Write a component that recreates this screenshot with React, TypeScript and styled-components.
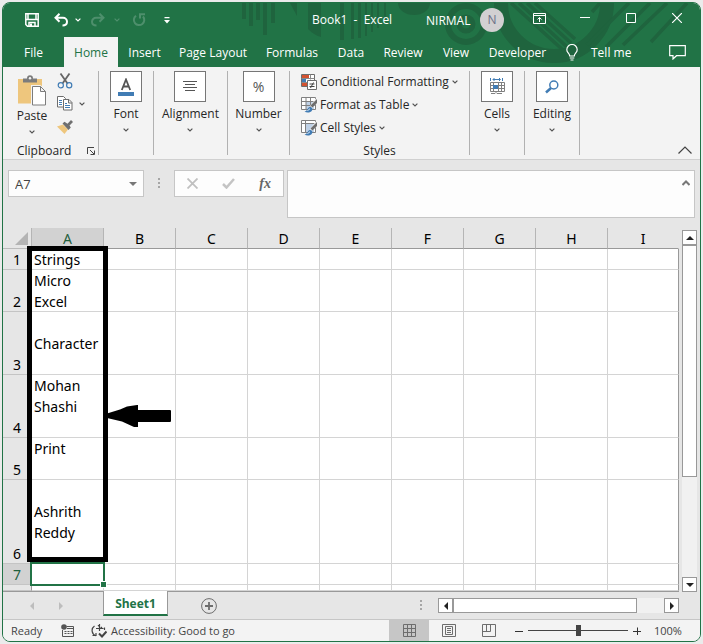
import React from "react";
import styled, { createGlobalStyle } from "styled-components";

const GREEN = "#217346";
const UI = `"Open Sans", "Noto Sans", sans-serif`;
const CELL = `"Noto Sans", "Open Sans", sans-serif`;

const GlobalStyle = createGlobalStyle`
  *, *::before, *::after { box-sizing: border-box; }
  body { margin: 0; background: #ebebeb; font-family: ${UI}; font-size: 12px; color: #262626; }
  button, input, textarea { font: inherit; color: inherit; margin: 0; }
  svg { display: block; flex: none; }
`;

const Desktop = styled.div`
  padding: 2px;
`;

const Window = styled.main`
  display: flex;
  flex-direction: column;
  border: 1px solid ${GREEN};
  border-radius: 8px;
  overflow: hidden;
  background: #e6e6e6;
`;

const PlainButton = styled.button`
  display: flex;
  align-items: center;
  justify-content: center;
  padding: 0;
  border: 0;
  background: none;
  cursor: pointer;
`;

/* ---------- header ---------- */

const Header = styled.header`
  position: relative;
  background: ${GREEN};
  color: #fff;
`;

const Decoration = styled.svg`
  position: absolute;
  top: 0;
  right: 0;
`;

const TitleBar = styled.div`
  position: relative;
  display: flex;
  align-items: center;
  height: 34px;
`;

const QuickTools = styled.div`
  display: flex;
  align-items: center;
  flex: 1;
  padding-left: 14px;
`;

const ToolButton = styled(PlainButton)<{ $width: number; $dim?: boolean }>`
  width: ${(p) => p.$width}px;
  height: 24px;
  color: ${(p) => (p.$dim ? "#4e8f6c" : "#fff")};
`;

const DocumentTitle = styled.h1`
  margin: 0;
  width: 114px;
  font-size: 12px;
  font-weight: 400;
  line-height: 18px;
  white-space: pre;
`;

const Account = styled(PlainButton)`
  width: 78px;
  justify-content: space-between;
  color: #fff;
`;

const Avatar = styled.span`
  width: 24px;
  height: 24px;
  border-radius: 50%;
  background: #d2d0d2;
  color: #6b6f86;
  line-height: 24px;
  text-align: center;
`;

const WindowButton = styled(PlainButton)`
  width: 46px;
  height: 30px;
  color: #fff;
`;

const WindowButtons = styled.div`
  display: flex;
  align-self: flex-start;
  padding-left: 12px;
`;

const TabBar = styled.nav`
  position: relative;
  display: flex;
  align-items: center;
  height: 30px;
`;

const RibbonTab = styled.button<{ $width: number; $active?: boolean }>`
  width: ${(p) => p.$width}px;
  height: 30px;
  padding: 0;
  border: 0;
  background: ${(p) => (p.$active ? "#f3f3f3" : "none")};
  color: ${(p) => (p.$active ? GREEN : "#fff")};
  white-space: nowrap;
`;

const TellMe = styled(PlainButton)`
  gap: 13px;
  margin-left: 10px;
  color: #fff;
`;

const CommentButton = styled(PlainButton)`
  margin-left: auto;
  margin-right: 14px;
  color: #fff;
`;

/* ---------- ribbon ---------- */

const Ribbon = styled.section`
  position: relative;
  display: flex;
  height: 93px;
  padding: 4px 0;
  background: #f3f3f3;
  border-bottom: 1px solid #d0d0d0;
`;

const Group = styled.div<{ $width: number }>`
  display: flex;
  flex-direction: column;
  align-items: center;
  width: ${(p) => p.$width}px;
  border-right: 1px solid #b1b1b1;
`;

const GroupBody = styled.div`
  display: flex;
  flex: 1;
  align-self: stretch;
`;

const GroupFooter = styled.div`
  display: flex;
  align-items: center;
  justify-content: center;
  align-self: stretch;
  height: 12px;
  line-height: 12px;
  margin-bottom: -2px;
`;

const ClipboardFooter = styled(GroupFooter)`
  justify-content: space-between;
  padding: 0 3px 0 14px;
`;

const PasteButton = styled(PlainButton)`
  flex-direction: column;
  justify-content: flex-start;
  width: 54px;
  padding: 4px 0 0 4px;
`;

const PasteLabel = styled.span`
  line-height: 20px;
  height: 24px;
`;

const SmallTools = styled.div`
  display: flex;
  flex-direction: column;
  margin-top: -2px;
`;

const SmallRow = styled.div`
  display: flex;
  align-items: center;
  gap: 6px;
  height: 23px;
`;

const Collapsed = styled(PlainButton)`
  flex-direction: column;
  justify-content: flex-start;
`;

const IconBox = styled.span`
  display: flex;
  align-items: center;
  justify-content: center;
  width: 32px;
  height: 31px;
  border: 1px solid #767676;
  background: #fff;
`;

const CollapsedLabel = styled.span`
  height: 26px;
  line-height: 24px;
`;

const StyleList = styled.div`
  display: flex;
  flex-direction: column;
  margin-top: -1px;
  padding-left: 11px;
`;

const StyleButton = styled(PlainButton)`
  justify-content: flex-start;
  gap: 3px;
  height: 23px;
  white-space: nowrap;
`;

const CollapseRibbon = styled(PlainButton)`
  margin: auto 8px 0 auto;
`;

/* ---------- formula bar ---------- */

const FormulaBar = styled.section`
  display: flex;
  align-items: flex-start;
  padding: 10px 5px;
`;

const Boxed = styled.div`
  display: flex;
  align-items: center;
  height: 27px;
  border: 1px solid #c6c6c6;
  background: #fdfdfd;
`;

const NameBox = styled(Boxed)`
  width: 136px;
`;

const NameInput = styled.input`
  flex: 1;
  min-width: 0;
  padding: 0 0 0 6px;
  border: 0;
  background: none;
  color: #444;
  font-size: 13px;
  outline: 0;
`;

const NameArrow = styled(PlainButton)`
  width: 20px;
  height: 24px;
`;

const GripSlot = styled.div`
  display: flex;
  align-items: center;
  justify-content: center;
  width: 30px;
  height: 27px;
`;

const FormulaActions = styled(Boxed)`
  justify-content: space-around;
  width: 110px;
  margin-right: 3px;
`;

const FormulaField = styled(Boxed)`
  flex: 1;
  align-items: stretch;
  height: 48px;
`;

const FormulaInput = styled.textarea`
  flex: 1;
  min-width: 0;
  padding: 4px;
  border: 0;
  background: none;
  outline: 0;
  resize: none;
`;

const ExpandFormula = styled(PlainButton)`
  width: 16px;
  height: 24px;
`;

/* ---------- sheet ---------- */

const SheetArea = styled.section`
  display: flex;
  gap: 3px;
  padding-right: 3px;
`;

const GridFrame = styled.div`
  position: relative;
  flex: 1;
  min-width: 0;
  border-bottom: 1px solid #999;
`;

const Grid = styled.table`
  width: 100%;
  table-layout: fixed;
  border-collapse: separate;
  border-spacing: 0;
  font-family: ${CELL};
  font-size: 14px;
  line-height: 20px;
  color: #000;
`;

const Column = styled.col<{ $width?: number }>`
  width: ${(p) => (p.$width ? p.$width + "px" : "auto")};
`;

const ColumnHead = styled.th<{ $selected?: boolean }>`
  height: 21px;
  padding: 2px 0 0;
  border-bottom: 1px solid #999;
  border-right: 1px solid #b5b5b5;
  background: ${(p) => (p.$selected ? "#d2d2d2" : "#e6e6e6")};
  color: ${(p) => (p.$selected ? "#1f5f3d" : "#000")};
  font-weight: 400;
  line-height: 18px;
  &:last-child { border-right-color: #e6e6e6; }
`;

const Corner = styled.td`
  height: 21px;
  padding: 0 0 0 12px;
  border-bottom: 1px solid #bbb;
  border-right: 1px solid #b5b5b5;
`;

const RowHead = styled.th<{ $selected?: boolean }>`
  padding: 0;
  border-bottom: 1px solid #c4c4c4;
  border-right: 1px solid #999;
  background: ${(p) => (p.$selected ? "#d2d2d2" : "#e6e6e6")};
  color: ${(p) => (p.$selected ? "#1f5f3d" : "#000")};
  font-weight: 400;
  line-height: 18px;
  vertical-align: bottom;
`;

const Row = styled.tr<{ $height: number }>`
  height: ${(p) => p.$height}px;
`;

const Cell = styled.td`
  position: relative;
  padding: 0 0 0 2px;
  border-right: 1px solid #d4d4d4;
  border-bottom: 1px solid #d4d4d4;
  background: #fff;
  line-height: 21px;
  vertical-align: top;
  white-space: pre;
  &:last-child { border-right-color: #999; }
`;

const CellText = styled.div<{ $height: number }>`
  height: ${(p) => p.$height}px;
`;

const Selection = styled.div`
  position: absolute;
  inset: -2px -2px -2px -2px;
  border: 2px solid ${GREEN};
  z-index: 1;
  &::after {
    content: "";
    position: absolute;
    right: -4px;
    bottom: -4px;
    width: 7px;
    height: 7px;
    border: 1px solid #fff;
    background: ${GREEN};
  }
`;

const Highlight = styled.div`
  position: absolute;
  left: 24px;
  top: 18px;
  width: 81px;
  height: 316px;
  border: 5px solid #000;
  z-index: 2;
`;

const Pointer = styled.svg`
  position: absolute;
  left: 104px;
  top: 176px;
  z-index: 2;
`;

const VerticalScroll = styled.div`
  display: flex;
  flex-direction: column;
  width: 15px;
  padding-top: 2px;
`;

const ScrollButton = styled(PlainButton)`
  flex: none;
  width: 15px;
  height: 15px;
  border: 1px solid #999;
  background: #fff;
`;

const VerticalTrack = styled.div`
  flex: 1;
  background: #f1f1f1;
`;

const VerticalThumb = styled.div`
  height: 70%;
  border: 1px solid #999;
  background: #fff;
`;

const SheetBar = styled.section`
  display: flex;
  align-items: center;
  height: 27px;
  padding-right: 21px;
`;

const SheetNav = styled.div`
  display: flex;
  justify-content: space-around;
  width: 100px;
  padding: 0 28px 0 15px;
`;

const SheetTab = styled.button`
  align-self: flex-start;
  position: relative;
  z-index: 1;
  width: 65px;
  height: 25px;
  margin-top: -1px;
  padding: 2px 0 0;
  border: 1px solid #999;
  border-top: 0;
  border-bottom: 2px solid ${GREEN};
  background: #fff;
  color: ${GREEN};
  font-weight: 700;
`;

const AddSheet = styled(PlainButton)`
  margin-left: 33px;
`;

const HorizontalScroll = styled.div`
  display: flex;
  width: 241px;
`;

const ScrollGrip = styled.div`
  margin-left: auto;
  margin-right: 15px;
`;

const HorizontalTrack = styled.div`
  flex: 1;
  background: #f1f1f1;
`;

const HorizontalThumb = styled.div`
  width: 87%;
  height: 15px;
  border: 1px solid #999;
  background: #fff;
`;

/* ---------- status bar ---------- */

const StatusBar = styled.footer`
  display: flex;
  align-items: center;
  height: 22px;
  padding-right: 18px;
  border-top: 1px solid #c6c6c6;
  background: #f3f3f3;
  font-size: 11px;
  color: #444;
`;

const Ready = styled.span`
  width: 58px;
  padding-left: 8px;
`;

const Accessibility = styled(PlainButton)`
  gap: 4px;
  margin-left: 17px;
  white-space: nowrap;
`;

const ViewButtons = styled.div`
  display: flex;
  margin-left: auto;
  margin-right: 1px;
`;

const ViewButton = styled(PlainButton)<{ $active?: boolean }>`
  width: 40px;
  height: 21px;
  background: ${(p) => (p.$active ? "#c6c6c6" : "none")};
`;

const ZoomButton = styled(PlainButton)`
  width: 18px;
  height: 20px;
`;

const ZoomSlider = styled.input`
  appearance: none;
  width: 100px;
  height: 14px;
  background: linear-gradient(#444, #444) center / 100% 1px no-repeat;
  &::-webkit-slider-thumb {
    appearance: none;
    width: 5px;
    height: 11px;
    background: #444;
  }
`;

const ZoomValue = styled.output`
  width: 28px;
  margin-left: 8px;
`;

/* ---------- icons ---------- */

const Chevron = ({ color = "#555" }: { color?: string }) => (
  <svg width="6" height="4" viewBox="0 0 6 4" fill="none" stroke={color} strokeWidth="1.2">
    <path d="M.6.6 3 3 5.4.6" />
  </svg>
);

const Grip = () => (
  <svg width="3" height="11" viewBox="0 0 3 11" fill="#a6a6a6">
    <path d="M0 0h2v2H0zM0 4h2v2H0zM0 8h2v2H0z" />
  </svg>
);

const Triangle = ({ d, color = "#222" }: { d: string; color?: string }) => (
  <svg width="8" height="8" viewBox="0 0 8 8" fill={color}>
    <path d={d} />
  </svg>
);

const LEFT = "M6 0v8L2 4z";
const RIGHT = "M2 0v8l4-4z";
const UP = "M0 6h8L4 2z";
const DOWN = "M0 2h8L4 6z";

const SaveIcon = () => (
  <svg width="14" height="14" viewBox="0 0 14 14" fill="none" stroke="currentColor" strokeWidth="1.5">
    <path d="M.8.8h12.4v12.4H2.5L.8 11.5zM1 6.5h12M3 1v5.5M11 1v5.5M4 13.5v-4h6v4" />
    <path d="M5 10.5h2v3H5z" fill="currentColor" stroke="none" />
  </svg>
);

const UndoIcon = () => (
  <svg width="15" height="14" viewBox="0 0 15 14" fill="none" stroke="currentColor" strokeWidth="2">
    <path d="M5.5.8 1.5 4.8l4 4M2 4.8h7a4 4 0 0 1 4 4c0 2.500-1.500 3.700-4.500 3.700" />
  </svg>
);

const RedoIcon = () => (
  <svg width="15" height="14" viewBox="0 0 15 14" fill="none" stroke="currentColor" strokeWidth="2">
    <path d="m9.500.8 4 4-4 4M13 4.800H6a4 4 0 0 0-4 4c0 2.500 1.500 3.700 4.500 3.700" />
  </svg>
);

const RepeatIcon = () => (
  <svg width="14" height="14" viewBox="0 0 14 14" fill="none" stroke="currentColor" strokeWidth="2">
    <path d="M4 2.700A5.200 5.200 0 1 0 11 3.500M8 5.500V1.200h5" />
  </svg>
);

const CustomizeIcon = () => (
  <svg width="6" height="7" viewBox="0 0 6 7" fill="currentColor">
    <path d="M.5 0h5v1.200h-5zM0 3h6L3 6.500z" />
  </svg>
);

const RibbonOptionsIcon = () => (
  <svg width="13" height="11" viewBox="0 0 13 11" fill="none" stroke="currentColor">
    <path d="M.5.5h12v10H.5zM.5 2.500h12M6.500 9V4.500M4.500 6.500l2-2 2 2" />
  </svg>
);

const BulbIcon = () => (
  <svg width="12" height="17" viewBox="0 0 12 17" fill="none" stroke="currentColor" strokeWidth="1.2">
    <path d="M3.700 12c0-2.500-2.900-3.200-2.900-6.300a5.200 5.200 0 0 1 10.400 0c0 3.100-2.900 3.800-2.900 6.300zM3.700 14h4.600M4.500 16h3" />
  </svg>
);

const CommentIcon = () => (
  <svg width="17" height="15" viewBox="0 0 17 15" fill="none" stroke="currentColor" strokeWidth="1.200">
    <path d="M.7.7h15.600v10H7.500l-3.500 3.300v-3.300H.7z" />
  </svg>
);

const PasteIcon = () => (
  <svg width="28" height="31" viewBox="0 0 28 31">
    <path d="M0 4h24v24.500H0z" fill="#eec67d" />
    <path d="M5 7.500V3.500h4C9 1.500 10 .3 12 .3s3 1.200 3 3.200h4v4z" fill="#7c7c7c" />
    <circle cx="12" cy="3.200" r="1.200" fill="#f3f3f3" />
    <path d="M13 10h9.500l6 6v15H13z" fill="#f3f3f3" />
    <path d="M14.500 11.500h8l5 5v13.500h-13zM22.500 11.500v5h5" fill="#fff" stroke="#7c7c7c" />
  </svg>
);

const CutIcon = () => (
  <svg width="16" height="16" viewBox="0 0 16 16" fill="none">
    <path d="m3.500.5 7 10M12.500.5l-7 10" stroke="#666" strokeWidth="1.800" />
    <circle cx="3.800" cy="12.300" r="2.600" stroke="#417cb4" strokeWidth="1.200" />
    <circle cx="12.200" cy="12.300" r="2.600" stroke="#417cb4" strokeWidth="1.200" />
  </svg>
);

const CopyIcon = () => (
  <svg width="16" height="15" viewBox="0 0 16 15" fill="#fff" stroke="#6d6d6d">
    <path d="M.5.500h6l2 2v8.500h-8z" />
    <path d="M2 4.500h3M2 6.500h3M2 8.500h3" stroke="#417cb4" />
    <path d="M6.500 3.500h5.500l3 3v7.500H6.500zM11.500 3.500v3.500h3.500" />
    <path d="M8 7.500h2M8 9.500h5M8 11.500h5" stroke="#417cb4" />
  </svg>
);

const BrushIcon = () => (
  <svg width="16" height="14" viewBox="0 0 16 14">
    <path d="m0 6.500 6-2 5 5L7.500 14z" fill="#eec67d" />
    <path d="m5.500 3.500 2-1.800 3 2L14 0l2 2-3.500 3.500 1.300 2-2.300 2.500z" fill="#6f6f6f" />
  </svg>
);

const LauncherIcon = () => (
  <svg width="8" height="8" viewBox="0 0 8 8" fill="none" stroke="#444">
    <path d="M7 .5H.5V7M3 3l4 4M7.500 3.500v4h-4" />
  </svg>
);

const FontIcon = () => (
  <svg width="16" height="18" viewBox="0 0 16 18">
    <path d="M0 14h16v4H0z" fill="#417cb4" />
    <path d="M3.800 12 8 1.500 12.200 12M5.300 8.500h5.400" fill="none" stroke="#555" strokeWidth="1.800" />
  </svg>
);

const AlignIcon = () => (
  <svg width="14" height="11" viewBox="0 0 14 11" stroke="#555">
    <path d="M0 .5h14M2 3.500h10M0 6.500h14M2 9.500h10" />
  </svg>
);

const PercentGlyph = styled.span`
  font-size: 14px;
  line-height: 18px;
  color: #555;
`;

const CellsIcon = () => (
  <svg width="15" height="17" viewBox="0 0 15 17" fill="none" stroke="#808080">
    <path d="M.5 0v3M12.500 0v3M3 1.500h7M4.500 0 3 1.500 4.500 3M9 0l1.500 1.500L9 3" stroke="#417cb4" />
    <path d="M.5 4.500h14v9H.5zM.5 7.500h14M.5 10.500h14M3.500 4.500v9M8.500 4.500v9M11.500 4.500v9M1 15.500h4l1-1 1 1h5" />
    <path d="M3 7h5v4H3z" fill="#417cb4" stroke="none" />
  </svg>
);

const SearchIcon = () => (
  <svg width="14" height="14" viewBox="0 0 14 14" fill="none" stroke="#417cb4">
    <circle cx="8.800" cy="5" r="4" strokeWidth="1.500" />
    <path d="m6 8-5 4.500" strokeWidth="2.500" />
  </svg>
);

const ConditionalIcon = () => (
  <svg width="16" height="16" viewBox="0 0 16 16">
    <path d="M.5.500h13v12H.500z" fill="#fff" stroke="#6d6d6d" />
    <path d="M9.500.500v5M.5 4.500h13M.5 8.500h6" stroke="#8a8a8a" />
    <path d="M1 1h7v3H1zM1 9h5v3H1z" fill="#d35230" />
    <path d="M1 5h4v3H1z" fill="#417cb4" />
    <path d="M6.500 6.500h9v9h-9z" fill="#fff" stroke="#6d6d6d" />
    <path d="M8.500 10h5M8.500 12.500h5M12.500 8.500l-3 5.500" stroke="#444" fill="none" />
  </svg>
);

const TableBrushIcon = ({ lines }: { lines: string }) => (
  <svg width="16" height="16" viewBox="0 0 16 16">
    <path d="M.5.500h14v12H.500z" fill="#fff" />
    <path d="M5 4h8v8H5z" fill="#bfd1e6" />
    <path d={"M.5.500h14v12H.500z" + lines} fill="none" stroke="#808080" />
    <path d="M16 0v6l-5 5-2-2z" fill="#f3f3f3" />
    <path d="M16 2v4l-4.500 4.500-2-2z" fill="#6d6d6d" />
    <path d="M3.500 14.500c3 0 2.500-4 5.500-4.500 2 0 3 2 2 3.500-1.500 2.500-5.500 2.500-7.500 1z" fill="#417cb4" />
    <path d="M6.500 13.500c1-.200 1.500-1.500 2.500-1.500" stroke="#fff" fill="none" />
  </svg>
);

const AddIcon = () => (
  <svg width="16" height="16" viewBox="0 0 16 16" fill="none" stroke="#6d6d6d">
    <circle cx="8" cy="8" r="7.400" />
    <path d="M8 4v8M4 8h8" strokeWidth="1.800" />
  </svg>
);

const FxGlyph = styled.span`
  font-family: "Liberation Serif", serif;
  font-style: italic;
  font-weight: 700;
  font-size: 14px;
  color: #666;
`;

const MacroIcon = () => (
  <svg width="13" height="13" viewBox="0 0 13 13" fill="none" stroke="#555">
    <path d="M5.500 2.500h7v10h-11V6M6 4.500h6" />
    <path d="M3.500 7.500h2M6.500 7.500h2M9.500 7.500h2M3.500 9.500h2M6.500 9.500h2M9.500 9.500h2" />
    <circle cx="3" cy="3" r="2.800" fill="#555" stroke="none" />
  </svg>
);

const AccessIcon = () => (
  <svg width="16" height="14" viewBox="0 0 16 14" fill="none" stroke="#444" strokeWidth="1.200">
    <path d="M3.500 2A5.500 5.500 0 0 0 5 11.800M5 4.500h3.500M8.500 0v7M7 2l1.500-1.500M11 3l-1.500 1.500h3M13.500 6V3.500" />
    <path d="m8 9.500 3 3 4.500-5" strokeWidth="2" />
    <path d="M1.500 11.500H5V9" />
  </svg>
);

const HeaderArt = () => (
  <Decoration width="461" height="64" viewBox="239 3 461 64" fill="none" stroke="#1f643e" aria-hidden="true">
    <path d="M244 3v16M251 3v23M258 3v17M265 3v32M273 3v20" strokeWidth="4" />
    <path d="M290 3h7v13zM308 3h13v34a30 30 0 0 1-13-8zM340 3h4v37h-4zM351 3h3v36h-3zM358 3h3v35h-3zM365 3h2v33h-2zM371 3h2v29h-2zM377 3h2v25h-2zM384 3h2v18h-2zM398 3h32a16 12 0 0 1-32 0z" fill="#1f643e" stroke="none" />
    <circle cx="466" cy="24" r="18" strokeWidth="6" />
    <circle cx="466" cy="24" r="7" strokeWidth="5" />
    <path d="M501 3a53 53 0 0 0 106 0" strokeWidth="14" />
    <path d="m511 3 53 48M519 3l48 44M527 3l44 40M535 3l40 36M600 3l-8 9M629 3l-42 42M650 3l-44 44M667 3l-44 42M687 3l-36 39" strokeWidth="3.500" />
  </Decoration>
);

/* ---------- data ---------- */

const TABS = [
  { name: "File", width: 61 },
  { name: "Home", width: 54, active: true },
  { name: "Insert", width: 53 },
  { name: "Page Layout", width: 84 },
  { name: "Formulas", width: 74 },
  { name: "Data", width: 44 },
  { name: "Review", width: 60 },
  { name: "View", width: 46 },
  { name: "Developer", width: 77 },
];

const COLUMNS = ["A", "B", "C", "D", "E", "F", "G", "H", "I"];

const ROWS = [
  { n: "1", height: 21, text: "Strings" },
  { n: "2", height: 42, text: "Micro\nExcel" },
  { n: "3", height: 63, text: "\nCharacter" },
  { n: "4", height: 63, text: "Mohan\nShashi" },
  { n: "5", height: 42, text: "Print" },
  { n: "6", height: 84, text: "\nAshrith\nReddy" },
  { n: "7", height: 21, text: "", selected: true },
  { n: "", height: 6, text: "" },
];

const CollapsedGroup = ({ name, width, children }: { name: string; width: number; children: React.ReactNode }) => (
  <Group $width={width}>
    <Collapsed>
      <IconBox>{children}</IconBox>
      <CollapsedLabel>{name}</CollapsedLabel>
      <Chevron />
    </Collapsed>
  </Group>
);

export default function App() {
  return (
    <Desktop>
      <GlobalStyle />
      <Window>
        <Header>
          <HeaderArt />
          <TitleBar>
            <QuickTools>
              <ToolButton $width={30} aria-label="Save"><SaveIcon /></ToolButton>
              <ToolButton $width={28} aria-label="Undo"><UndoIcon /></ToolButton>
              <ToolButton $width={6} aria-label="Undo history"><Chevron color="#fff" /></ToolButton>
              <ToolButton $width={33} $dim aria-label="Redo"><RedoIcon /></ToolButton>
              <ToolButton $width={6} $dim aria-label="Redo history"><Chevron color="#4e8f6c" /></ToolButton>
              <ToolButton $width={38} $dim aria-label="Repeat"><RepeatIcon /></ToolButton>
              <ToolButton $width={18} aria-label="Customize toolbar"><CustomizeIcon /></ToolButton>
            </QuickTools>
            <DocumentTitle>{"Book1  -  Excel"}</DocumentTitle>
            <Account>NIRMAL<Avatar>N</Avatar></Account>
            <WindowButtons>
              <WindowButton aria-label="Ribbon display options"><RibbonOptionsIcon /></WindowButton>
              <WindowButton aria-label="Minimize">
                <svg width="10" height="10" stroke="currentColor"><path d="M0 4.500h10" /></svg>
              </WindowButton>
              <WindowButton aria-label="Maximize">
                <svg width="10" height="10" stroke="currentColor" fill="none"><path d="M.5.500h9v9H.5z" /></svg>
              </WindowButton>
              <WindowButton aria-label="Close">
                <svg width="10" height="10" stroke="currentColor" strokeWidth="1.200"><path d="m0 0 10 10M10 0 0 10" /></svg>
              </WindowButton>
            </WindowButtons>
          </TitleBar>
          <TabBar>
            {TABS.map((t) => (
              <RibbonTab key={t.name} $width={t.width} $active={t.active}>{t.name}</RibbonTab>
            ))}
            <TellMe><BulbIcon />Tell me</TellMe>
            <CommentButton aria-label="Comments"><CommentIcon /></CommentButton>
          </TabBar>
        </Header>

        <Ribbon>
          <Group $width={96}>
            <GroupBody>
              <PasteButton>
                <PasteIcon />
                <PasteLabel>Paste</PasteLabel>
                <Chevron />
              </PasteButton>
              <SmallTools>
                <SmallRow><PlainButton aria-label="Cut"><CutIcon /></PlainButton></SmallRow>
                <SmallRow>
                  <PlainButton aria-label="Copy"><CopyIcon /></PlainButton>
                  <PlainButton aria-label="Copy options"><Chevron /></PlainButton>
                </SmallRow>
                <SmallRow><PlainButton aria-label="Format painter"><BrushIcon /></PlainButton></SmallRow>
              </SmallTools>
            </GroupBody>
            <ClipboardFooter>
              Clipboard
              <PlainButton aria-label="Clipboard settings"><LauncherIcon /></PlainButton>
            </ClipboardFooter>
          </Group>
          <CollapsedGroup name="Font" width={55}><FontIcon /></CollapsedGroup>
          <CollapsedGroup name="Alignment" width={74}><AlignIcon /></CollapsedGroup>
          <CollapsedGroup name="Number" width={62}><PercentGlyph>%</PercentGlyph></CollapsedGroup>
          <Group $width={180}>
            <GroupBody>
              <StyleList>
                <StyleButton><ConditionalIcon />Conditional Formatting <Chevron /></StyleButton>
                <StyleButton><TableBrushIcon lines="M.5 4.500h14M.5 8.500h14M5 .5v12M9.500.500v12" />Format as Table <Chevron /></StyleButton>
                <StyleButton><TableBrushIcon lines="M.5 3.500h14M4.500.500v12" />Cell Styles <Chevron /></StyleButton>
              </StyleList>
            </GroupBody>
            <GroupFooter>Styles</GroupFooter>
          </Group>
          <CollapsedGroup name="Cells" width={55}><CellsIcon /></CollapsedGroup>
          <CollapsedGroup name="Editing" width={55}><SearchIcon /></CollapsedGroup>
          <CollapseRibbon aria-label="Collapse ribbon">
            <svg width="14" height="9" fill="none" stroke="#444" strokeWidth="1.200"><path d="m.5 7.500 6.500-6.500 6.500 6.500" /></svg>
          </CollapseRibbon>
        </Ribbon>

        <FormulaBar>
          <NameBox>
            <NameInput aria-label="Name box" defaultValue="A7" />
            <NameArrow aria-label="Show names"><Triangle d={DOWN} color="#777" /></NameArrow>
          </NameBox>
          <GripSlot><Grip /></GripSlot>
          <FormulaActions>
            <PlainButton aria-label="Cancel">
              <svg width="11" height="11" stroke="#c0c0c0" strokeWidth="1.800"><path d="m.5.500 10 10M10.500.500l-10 10" /></svg>
            </PlainButton>
            <PlainButton aria-label="Enter">
              <svg width="13" height="11" stroke="#c4c4c4" strokeWidth="2.500" fill="none"><path d="m1 6 3.500 3.500L12 1" /></svg>
            </PlainButton>
            <PlainButton aria-label="Insert function"><FxGlyph>fx</FxGlyph></PlainButton>
          </FormulaActions>
          <FormulaField>
            <FormulaInput aria-label="Formula" />
            <ExpandFormula aria-label="Collapse formula bar">
              <svg width="8" height="6" fill="none" stroke="#777" strokeWidth="2"><path d="m.5 5 3.500-3.500L7.500 5" /></svg>
            </ExpandFormula>
          </FormulaField>
        </FormulaBar>

        <SheetArea>
          <GridFrame>
            <Grid>
              <colgroup>
                <Column $width={29} />
                {COLUMNS.map((c, i) => (
                  <Column key={c} $width={i < COLUMNS.length - 1 ? 72 : undefined} />
                ))}
              </colgroup>
              <thead>
                <tr>
                  <Corner>
                    <svg width="13" height="13" fill="#b4b4b4"><path d="M13 0v13H0z" /></svg>
                  </Corner>
                  {COLUMNS.map((c, i) => (
                    <ColumnHead key={c} scope="col" $selected={i === 0}>{c}</ColumnHead>
                  ))}
                </tr>
              </thead>
              <tbody>
                {ROWS.map((r, i) => (
                  <Row key={i} $height={r.height}>
                    <RowHead scope="row" $selected={r.selected}>{r.n}</RowHead>
                    {COLUMNS.map((c, j) => (
                      <Cell key={c}>
                        {j === 0 && r.text && <CellText $height={r.height - 1}>{r.text}</CellText>}
                        {j === 0 && r.selected && <Selection />}
                      </Cell>
                    ))}
                  </Row>
                ))}
              </tbody>
            </Grid>
            <Highlight />
            <Pointer width="64" height="23" viewBox="0 0 64 23">
              <path d="M0 9.500 13 5.500 20 2.500 30 1h1v5h32q1 0 1 1v10q0 1-1 1H31v5h-4L15 17.500 0 14z" />
            </Pointer>
          </GridFrame>
          <VerticalScroll>
            <ScrollButton aria-label="Scroll up"><Triangle d={UP} /></ScrollButton>
            <VerticalTrack><VerticalThumb /></VerticalTrack>
            <ScrollButton aria-label="Scroll down"><Triangle d={DOWN} /></ScrollButton>
          </VerticalScroll>
        </SheetArea>

        <SheetBar>
          <SheetNav>
            <PlainButton aria-label="Previous sheet"><Triangle d={LEFT} color="#bdbdbd" /></PlainButton>
            <PlainButton aria-label="Next sheet"><Triangle d={RIGHT} color="#bdbdbd" /></PlainButton>
          </SheetNav>
          <SheetTab>Sheet1</SheetTab>
          <AddSheet aria-label="New sheet"><AddIcon /></AddSheet>
          <ScrollGrip><Grip /></ScrollGrip>
          <HorizontalScroll>
            <ScrollButton aria-label="Scroll left"><Triangle d={LEFT} /></ScrollButton>
            <HorizontalTrack><HorizontalThumb /></HorizontalTrack>
            <ScrollButton aria-label="Scroll right"><Triangle d={RIGHT} /></ScrollButton>
          </HorizontalScroll>
        </SheetBar>

        <StatusBar>
          <Ready>Ready</Ready>
          <PlainButton aria-label="Record macro"><MacroIcon /></PlainButton>
          <Accessibility><AccessIcon />Accessibility: Good to go</Accessibility>
          <ViewButtons>
            <ViewButton $active aria-label="Normal view">
              <svg width="13" height="13" fill="none" stroke="#6d6d6d"><path d="M.5.500h12v12H.5zM.5 4.500h12M.5 8.500h12M4.500.500v12M8.500.500v12" /></svg>
            </ViewButton>
            <ViewButton aria-label="Page layout view">
              <svg width="14" height="13" fill="none" stroke="#6d6d6d"><path d="M.5.500h13v12H.5zM3.500 2.500h7v8h-7zM5 4.500h4M5 6.500h4M5 8.500h4" /></svg>
            </ViewButton>
            <ViewButton aria-label="Page break preview">
              <svg width="14" height="13" fill="none" stroke="#6d6d6d"><path d="M.5.500h13v12H.5zM.5 7.500h8v-7M4.500.500v7" /></svg>
            </ViewButton>
          </ViewButtons>
          <ZoomButton aria-label="Zoom out"><svg width="8" height="8" stroke="#333"><path d="M0 4.500h8" /></svg></ZoomButton>
          <ZoomSlider type="range" min="10" max="190" defaultValue="100" aria-label="Zoom" />
          <ZoomButton aria-label="Zoom in"><svg width="8" height="8" stroke="#333"><path d="M0 4.500h8M4.500.500v8" /></svg></ZoomButton>
          <ZoomValue>100%</ZoomValue>
        </StatusBar>
      </Window>
    </Desktop>
  );
}
